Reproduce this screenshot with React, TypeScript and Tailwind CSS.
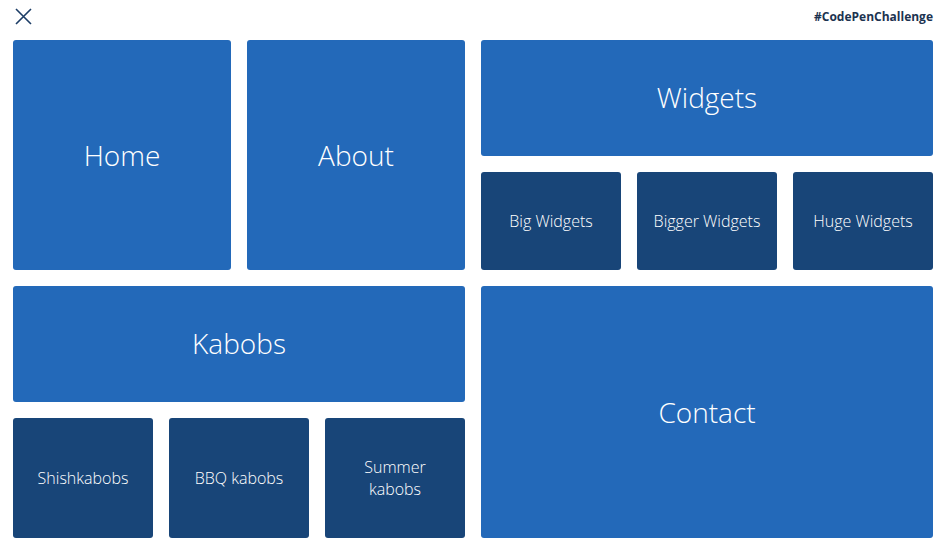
import React from 'react';

const big = 'bg-[#2369b9] rounded-[3px] flex items-center justify-center text-white font-light text-[28px] leading-[38px]';
const small = 'bg-[#184578] rounded-[3px] flex items-center justify-center text-center text-white font-light text-[16px] leading-[22px]';

const Tile = ({ className, children }: { className: string; children: React.ReactNode }) => (
  <a href="#" className={className}>
    {children}
  </a>
);

export default function App() {
  return (
    <div
      className="w-[934px] h-[550px] bg-white relative overflow-hidden"
      style={{ fontFamily: '"Open Sans", sans-serif' }}
    >
      <div className="h-[40px] flex items-start justify-between pl-[15px] pr-px">
        <button className="mt-[8px] w-[17px] h-[17px] text-[#1c3d66]">
          <svg viewBox="0 0 17 17" className="w-[17px] h-[17px]" fill="none" stroke="currentColor" strokeWidth="1.6">
            <path d="M1 1 L16 16 M16 1 L1 16" />
          </svg>
        </button>
        <span className="mt-[8px] text-[12px] font-bold text-[#1c3350]">#CodePenChallenge</span>
      </div>
      <div className="ml-[13px] w-[920px] flex flex-col gap-4">
        <div className="flex gap-4 h-[230px]">
          <Tile className={`${big} w-[218px]`}>Home</Tile>
          <Tile className={`${big} w-[218px]`}>About</Tile>
          <div className="w-[452px] flex flex-col gap-4">
            <Tile className={`${big} h-[116px] pb-[2px]`}>Widgets</Tile>
            <div className="flex-1 grid grid-cols-3 gap-4">
              <Tile className={small}>Big Widgets</Tile>
              <Tile className={small}>Bigger Widgets</Tile>
              <Tile className={small}>Huge Widgets</Tile>
            </div>
          </div>
        </div>
        <div className="flex gap-4 h-[252px]">
          <div className="w-[452px] flex flex-col gap-4">
            <Tile className={`${big} h-[116px] pb-[2px]`}>Kabobs</Tile>
            <div className="flex-1 grid grid-cols-3 gap-4">
              <Tile className={small}>Shishkabobs</Tile>
              <Tile className={small}>BBQ kabobs</Tile>
              <Tile className={`${small} px-8`}>Summer kabobs</Tile>
            </div>
          </div>
          <Tile className={`${big} w-[452px]`}>Contact</Tile>
        </div>
      </div>
    </div>
  );
}
